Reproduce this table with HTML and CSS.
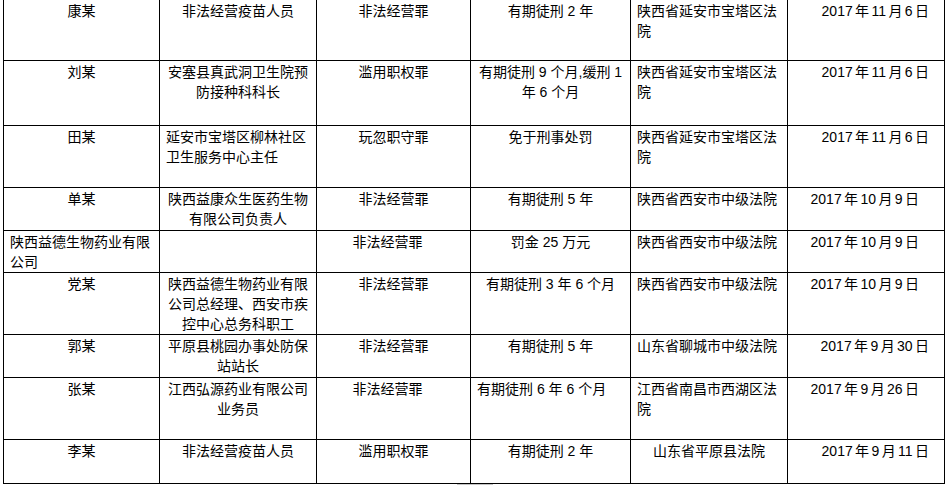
FILE: index.html
```html
<!DOCTYPE html>
<html lang="zh-CN">
<head>
<meta charset="utf-8">
<title>判决列表</title>
<link rel="stylesheet" href="styles.css">
</head>
<body>
<div class="page">
<table class="list">
  <colgroup>
    <col class="c1"><col class="c2"><col class="c3"><col class="c4"><col class="c5"><col class="c6">
  </colgroup>
  <tbody>
    <tr class="r1">
      <td class="ctr">康某</td>
      <td class="ctr">非法经营疫苗人员</td>
      <td class="ctr">非法经营罪</td>
      <td class="ctr">有期徒刑 2 年</td>
      <td class="lft">陕西省延安市宝塔区法<br>院</td>
      <td class="date">2017 年 11 月 6 日</td>
    </tr>
    <tr class="r2">
      <td class="ctr">刘某</td>
      <td class="ctr">安塞县真武洞卫生院预<br>防接种科科长</td>
      <td class="ctr">滥用职权罪</td>
      <td class="ctr">有期徒刑 9 个月,缓刑 1<br>年 6 个月</td>
      <td class="lft">陕西省延安市宝塔区法<br>院</td>
      <td class="date">2017 年 11 月 6 日</td>
    </tr>
    <tr class="r3">
      <td class="ctr">田某</td>
      <td class="lft">延安市宝塔区柳林社区<br>卫生服务中心主任</td>
      <td class="ctr">玩忽职守罪</td>
      <td class="ctr">免于刑事处罚</td>
      <td class="lft">陕西省延安市宝塔区法<br>院</td>
      <td class="date">2017 年 11 月 6 日</td>
    </tr>
    <tr class="r4">
      <td class="ctr">单某</td>
      <td class="ctr">陕西益康众生医药生物<br>有限公司负责人</td>
      <td class="ctr">非法经营罪</td>
      <td class="ctr">有期徒刑 5 年</td>
      <td class="lft">陕西省西安市中级法院</td>
      <td class="date mid">2017 年 10 月 9 日</td>
    </tr>
    <tr class="r5">
      <td class="lft">陕西益德生物药业有限<br>公司</td>
      <td class="ctr"></td>
      <td class="ctr shift">非法经营罪</td>
      <td class="ctr">罚金 25 万元</td>
      <td class="lft">陕西省西安市中级法院</td>
      <td class="date mid">2017 年 10 月 9 日</td>
    </tr>
    <tr class="r6">
      <td class="ctr">党某</td>
      <td class="ctr">陕西益德生物药业有限<br>公司总经理、西安市疾<br>控中心总务科职工</td>
      <td class="ctr">非法经营罪</td>
      <td class="ctr">有期徒刑 3 年 6 个月</td>
      <td class="lft">陕西省西安市中级法院</td>
      <td class="date mid">2017 年 10 月 9 日</td>
    </tr>
    <tr class="r7">
      <td class="ctr">郭某</td>
      <td class="ctr">平原县桃园办事处防保<br>站站长</td>
      <td class="ctr">非法经营罪</td>
      <td class="ctr">有期徒刑 5 年</td>
      <td class="lft">山东省聊城市中级法院</td>
      <td class="date">2017 年 9 月 30 日</td>
    </tr>
    <tr class="r8">
      <td class="ctr">张某</td>
      <td class="ctr">江西弘源药业有限公司<br>业务员</td>
      <td class="ctr shift">非法经营罪</td>
      <td class="lft">有期徒刑 6 年 6 个月</td>
      <td class="lft">江西省南昌市西湖区法<br>院</td>
      <td class="date mid">2017 年 9 月 26 日</td>
    </tr>
    <tr class="r9">
      <td class="ctr">李某</td>
      <td class="ctr">非法经营疫苗人员</td>
      <td class="ctr">滥用职权罪</td>
      <td class="ctr">有期徒刑 2 年</td>
      <td class="ctr">山东省平原县法院</td>
      <td class="date">2017 年 9 月 11 日</td>
    </tr>
  </tbody>
</table>
<div class="scroll-thumb"></div>
</div>
</body>
</html>
```

FILE: styles.css
```css
html, body {
  margin: 0;
  padding: 0;
  background: #ffffff;
  overflow: hidden;
}

.page {
  padding-left: 3px;
  margin-top: -1px;
}

.list {
  border-collapse: separate;
  border-spacing: 0;
  table-layout: fixed;
  width: 942px;
  font-family: "Liberation Sans", "Noto Sans CJK SC", sans-serif;
  font-size: 14px;
  line-height: 20px;
  color: #000000;
}

.c1 { width: 156px; }
.c2 { width: 157px; }
.c3 { width: 154px; }
.c4 { width: 160px; }
.c5 { width: 157px; }
.c6 { width: 158px; }

.list td {
  box-sizing: border-box;
  border-top: 1px solid #000000;
  border-left: 1px solid #000000;
  padding: 1px 6px 0 6px;
  vertical-align: top;
  white-space: nowrap;
  overflow: hidden;
}

.list td:last-child {
  border-right: 1px solid #000000;
}

.list tr.r9 td {
  border-bottom: 1px solid #000000;
}

.r1 td { height: 61px; }
.r2 td { height: 65px; }
.r3 td { height: 62px; }
.r4 td { height: 43px; }
.r5 td { height: 41px; }
.r6 td { height: 62px; }
.r7 td { height: 43px; }
.r8 td { height: 62px; }
.r9 td { height: 45px; }

.ctr { text-align: center; }
.lft { text-align: left; }

.list td.shift {
  padding-right: 18px;
}

.list td.date {
  text-align: right;
  padding-right: 15px;
  word-spacing: -1.5px;
}

.list td.date.mid {
  padding-right: 25px;
}

.scroll-thumb {
  width: 36px;
  height: 4px;
  margin-left: 454px;
  background: #c3c3c3;
}
```
